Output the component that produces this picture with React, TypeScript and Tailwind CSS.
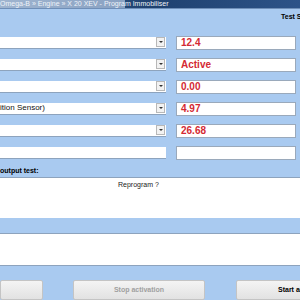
import React from "react";

const rows = [
  { label: "", value: "12.4", combo: true },
  { label: "", value: "Active", combo: true },
  { label: "", value: "0.00", combo: true },
  { label: "ition Sensor)", value: "4.97", combo: true },
  { label: "", value: "26.68", combo: true },
  { label: "", value: "", combo: false },
];

function ComboArrow() {
  return (
    <div className="w-[9px] h-[10px] mr-[1px] bg-[#f2f2f2] border border-[#b8b8b8] flex items-center justify-center">
      <div className="w-0 h-0 border-l-[2px] border-r-[2px] border-t-[2px] border-l-transparent border-r-transparent border-t-[#333]" />
    </div>
  );
}

export default function App() {
  return (
    <div
      className="w-[300px] h-[300px] overflow-hidden bg-[#a9caf0] flex flex-col"
      style={{ fontFamily: '"Liberation Sans", Arial, sans-serif' }}
    >
      {/* Title bar */}
      <div className="h-[9px] flex bg-gradient-to-r from-[#3f6594] via-[#1f416f] to-[#2d5388] border-b border-[#6f8fb8]">
        <div className="w-[125px] h-full bg-gradient-to-r from-[#9fb4cf] to-[#8aa2c2] flex items-center">
          <span className="text-[7px] leading-none text-[#eef3f9] whitespace-nowrap">
            Omega-B » Engine » X 20 XEV - Program Immobiliser
          </span>
        </div>
      </div>

      {/* Header */}
      <div className="h-[27px] flex items-start pt-[4px] pl-[281px] text-[7px] leading-none">
        <span className="font-bold text-black whitespace-nowrap">Test Status</span>
      </div>

      {/* Value rows */}
      <div className="flex flex-col gap-[8px]">
        {rows.map((r, i) => (
          <div key={i} className="h-[14px] flex items-center">
            <div className="w-[166px] h-[12px] bg-white border-b border-[#8da3bd] flex items-center justify-between">
              <span className="text-[8px] text-[#111] whitespace-nowrap leading-none">{r.label}</span>
              {r.combo && <ComboArrow />}
            </div>
            <div className="ml-[10px] w-[120px] h-[14px] bg-white border border-[#9aa9bb] flex items-center pl-[4px]">
              <span className="text-[10px] font-bold text-[#d42a33] leading-none">{r.value}</span>
            </div>
          </div>
        ))}
      </div>

      {/* Output test */}
      <div className="h-[18px] flex items-end pb-[3px] border-b border-[#8da3bd]">
        <span className="text-[7px] font-bold text-black leading-none whitespace-nowrap">output test:</span>
      </div>
      <div className="h-[40px] bg-white pl-[118px] pt-[3px] text-[7px] leading-none">
        <span className="text-[#222]">Reprogram ?</span>
      </div>

      <div className="h-[17px] border-b border-[#8da3bd]" />
      <div className="h-[32px] bg-white border-b border-[#8da3bd]" />
      <div className="h-[14px]" />

      {/* Buttons */}
      <div className="flex h-[20px]">
        <div className="shrink-0 w-[43px] h-full bg-gradient-to-b from-[#f4f4f4] to-[#e2e2e2] border border-[#c4c4c4] rounded-[2px]" />
        <div className="shrink-0 ml-[30px] w-[132px] h-full bg-gradient-to-b from-[#f4f4f4] to-[#e2e2e2] border border-[#c4c4c4] rounded-[2px] flex items-center justify-center">
          <span className="text-[7px] font-bold text-[#a0a0a0] whitespace-nowrap">Stop activation</span>
        </div>
        <div className="shrink-0 ml-[31px] w-[80px] h-full bg-gradient-to-b from-[#f4f4f4] to-[#e2e2e2] border border-[#c4c4c4] rounded-[2px] flex items-center pl-[41px]">
          <span className="text-[7px] font-bold text-black whitespace-nowrap">Start activation</span>
        </div>
      </div>
    </div>
  );
}
